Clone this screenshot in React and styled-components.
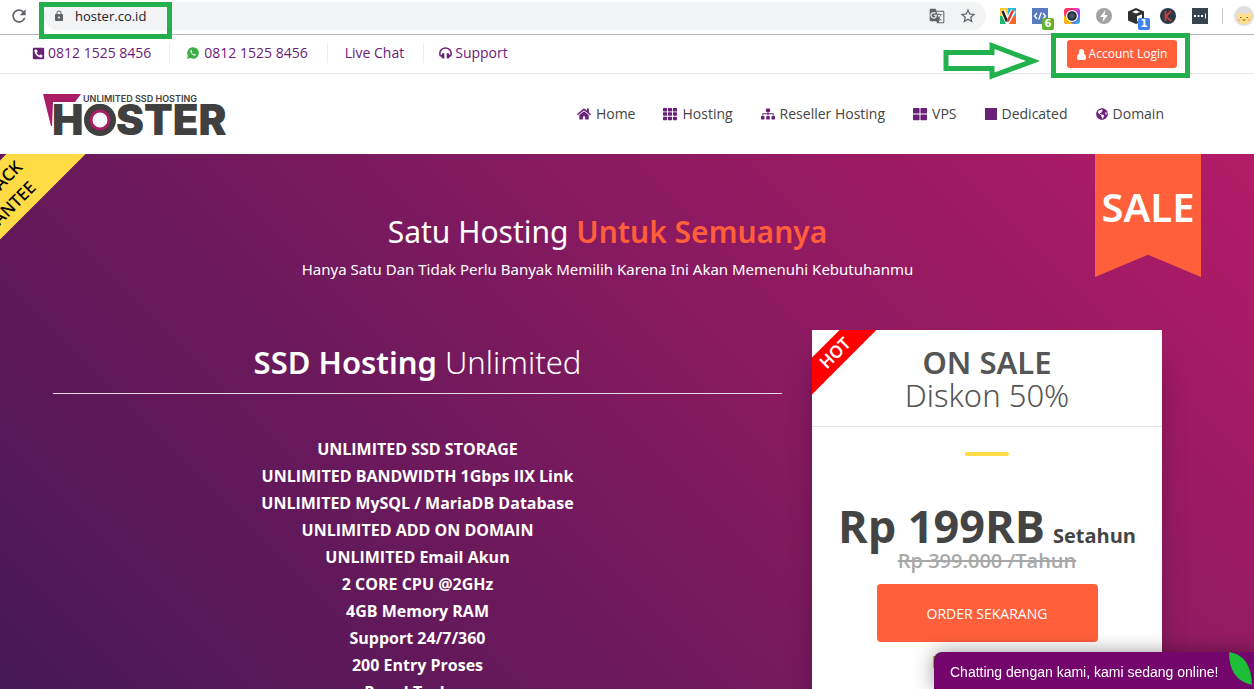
import React from "react";
import styled, { createGlobalStyle } from "styled-components";
import {
  FaPhoneSquareAlt,
  FaHome,
  FaTh,
  FaSitemap,
  FaThLarge,
  FaSquareFull,
  FaGlobeAmericas,
} from "react-icons/fa";
import { MdGTranslate, MdLock, MdRefresh, MdStarBorder } from "react-icons/md";

const purple = "#6b217a";
const orange = "#ff5f3a";
const marker = "#22b14c";
const bodyFont = `"Open Sans", "Noto Sans", sans-serif`;
const headFont = `"Noto Sans", "Open Sans", sans-serif`;

const GlobalStyle = createGlobalStyle`
  *, *::before, *::after { box-sizing: border-box; }
  body { margin: 0; background: #fff; font-family: ${bodyFont}; }
  h1, h2, p, ul { margin: 0; padding: 0; }
  ul { list-style: none; }
  a { color: inherit; text-decoration: none; }
  button { border: 0; padding: 0; background: none; font: inherit; color: inherit; cursor: pointer; }
  svg { display: block; flex: none; }
`;

const Window = styled.div`
  display: flex;
  flex-direction: column;
  height: 100vh;
  overflow: hidden;
`;

/* Browser toolbar */
const Toolbar = styled.div`
  display: flex;
  align-items: center;
  flex: none;
  height: 35px;
  padding: 0 0 2px 9px;
  border-bottom: 1px solid #b4b4b4;
`;

const ToolButton = styled.button`
  display: flex;
  color: #5f6368;
`;

const AddressBar = styled.div`
  position: relative;
  display: flex;
  align-items: center;
  flex: 1;
  gap: 14px;
  height: 28px;
  margin-left: 15px;
  padding: 0 9px;
  border-radius: 14px;
  background: #f1f3f4;
  color: #5f6368;
`;

const AddressInput = styled.input`
  flex: 1;
  min-width: 0;
  margin-left: -4px;
  padding: 0;
  border: 0;
  outline: 0;
  background: none;
  color: #202124;
  font: 13px/20px ${bodyFont};
`;

const AddressMarker = styled.span`
  position: absolute;
  z-index: 3;
  top: 0;
  left: -5px;
  width: 133px;
  height: 37px;
  border: 5px solid ${marker};
  pointer-events: none;
`;

const Extensions = styled.div`
  display: flex;
  align-items: center;
  gap: 16px;
  margin-left: 14px;
`;

const Extension = styled.button`
  position: relative;
  display: flex;
  width: 16px;
  height: 16px;
`;

const Count = styled.span`
  position: absolute;
  left: 10px;
  top: 10px;
  min-width: 12px;
  height: 12px;
  border-radius: 2px;
  background: ${(p) => p.$color};
  color: #fff;
  font: bold 10px/12px "DejaVu Sans", sans-serif;
  text-align: center;
`;

const ToolDivider = styled.span`
  width: 1px;
  height: 16px;
  margin: 0 11px 0 14px;
  background: #c8cacd;
`;

/* Contact strip */
const ContactBar = styled.div`
  display: flex;
  align-items: center;
  justify-content: space-between;
  flex: none;
  height: 39px;
  padding: 0 77px 2px 32px;
  border-bottom: 1px solid #e4e4e4;
  color: ${purple};
  font-size: 14px;
  line-height: 20px;
`;

const ContactList = styled.ul`
  display: flex;
`;

const Contact = styled.li`
  padding: 0 19px 0 17px;
  border-right: 1px solid #ededed;

  &:first-child { padding: 0 18px 0 0; }
  &:last-child { border: 0; padding-left: 15px; }
`;

const IconLink = styled.a`
  display: flex;
  align-items: center;
  gap: ${(p) => p.$gap || 5}px;
`;

const LoginArea = styled.div`
  position: relative;
  display: flex;
  margin-top: 2px;
`;

const LoginButton = styled.button`
  display: flex;
  align-items: center;
  justify-content: center;
  gap: 3px;
  width: 110px;
  height: 28px;
  border-radius: 3px;
  background: ${orange};
  color: #fff;
  font-size: 12px;
  font-weight: 500;
`;

const LoginMarker = styled.span`
  position: absolute;
  z-index: 2;
  inset: -7px -13px -10px -16px;
  border: 5px solid ${marker};
  pointer-events: none;
`;

const ArrowMarker = styled.svg`
  position: absolute;
  z-index: 2;
  right: 138px;
  top: 1px;
  pointer-events: none;
`;

/* Header with logo and main menu */
const Header = styled.header`
  display: flex;
  align-items: center;
  justify-content: space-between;
  flex: none;
  height: 80px;
  padding: 0 90px 0 43px;
`;

const Menu = styled.nav`
  display: flex;
  gap: 28px;
  color: #444;
  font-size: 14px;
  line-height: 20px;

  svg { color: ${purple}; }
`;

/* Hero */
const Hero = styled.main`
  position: relative;
  flex: 1;
  min-height: 0;
  overflow: hidden;
  padding: 58px 92px 0 53px;
  background: linear-gradient(45deg, #461856, #b31b67);
  color: #fff;
`;

const MoneyBack = styled.div`
  position: absolute;
  left: -161px;
  top: 29px;
  width: 300px;
  height: 56px;
  padding: 4px 0;
  background: #ffdc45;
  color: #000;
  font: 500 17px/24px ${headFont};
  text-align: center;
  transform: rotate(-45deg);
`;

const SaleFlag = styled.div`
  position: absolute;
  right: 53px;
  top: 0;
  width: 106px;
  height: 123px;
  background: ${orange};
  clip-path: polygon(0 0, 100% 0, 100% 100%, 50% 82%, 0 100%);
  font: 600 40px/106px ${headFont};
  text-align: center;
`;

const Title = styled.h1`
  font: 400 30px/40px ${headFont};
  text-align: center;

  strong { color: ${orange}; font-weight: 600; }
`;

const Subtitle = styled.p`
  font: 400 15px/20px ${headFont};
  margin-top: 7px;
  text-align: center;
`;

const Columns = styled.div`
  display: grid;
  grid-template-columns: 1fr 350px;
  gap: 30px;
  margin-top: 51px;
`;

const PlanTitle = styled.h2`
  padding: 12px 0 10px;
  border-bottom: 1px solid #e9dbe5;
  font: 300 31px/41px ${headFont};
  text-align: center;

  strong { font-weight: 600; }
`;

const FeatureList = styled.ul`
  margin-top: 42px;
  font: 700 16px/27px ${bodyFont};
  text-align: center;
`;

const Card = styled.section`
  position: relative;
  overflow: hidden;
  height: 100%;
  background: #fff;
  color: #444;
  text-align: center;
`;

const CardShadow = styled.div`
  height: 480px;
  box-shadow: 0 30px 24px rgba(0, 0, 0, 0.2);
`;

const Hot = styled.div`
  position: absolute;
  left: -37px;
  top: 10px;
  width: 120px;
  height: 26px;
  background: #f00;
  color: #fff;
  font: 600 17px/26px ${headFont};
  transform: rotate(-45deg);
`;

const CardHead = styled.div`
  height: 97px;
  padding-top: 16px;
  border-bottom: 1px solid #e2e2e2;
  color: #555;
  font: 300 31px/33px ${headFont};

  strong { display: block; font-weight: 600; }
`;

const Accent = styled.div`
  width: 44px;
  height: 4px;
  margin: 25px auto 40px;
  border-radius: 2px;
  background: #ffdc45;
`;

const Price = styled.p`
  display: flex;
  align-items: baseline;
  justify-content: center;
  gap: 8px;
  height: 60px;
  font-size: 20px;
  font-weight: 700;
  line-height: 60px;
  white-space: nowrap;

  strong { font-size: 45px; font-weight: 700; }
`;

const OldPrice = styled.s`
  display: block;
  margin-top: -8px;
  color: #a8a8a8;
  font-size: 20px;
  font-weight: 600;
  line-height: 26px;
`;

const OrderButton = styled.button`
  width: 221px;
  height: 58px;
  margin-top: 10px;
  border-radius: 4px;
  background: ${orange};
  color: #fff;
  font-size: 14px;
`;

const Bonus = styled.p`
  margin-top: 10px;
  color: #8fb936;
  font-size: 16px;
  font-weight: 700;
  line-height: 20px;
`;

const Chat = styled.button`
  position: fixed;
  z-index: 4;
  right: 0;
  bottom: 0;
  width: 320px;
  height: 37px;
  padding: 3px 35px 0 16px;
  border-radius: 8px 0 0 0;
  background: #73056d;
  box-shadow: 0 0 20px rgba(0, 0, 0, 0.4);
  color: #fff;
  font: 14px/20px "Liberation Sans", Arial, sans-serif;
  text-align: left;
  white-space: nowrap;
`;

const Leaf = styled.svg`
  position: absolute;
  right: 2px;
  top: 0;
`;

function Logo() {
  return (
    <svg width="184" height="46" viewBox="0 0 184 46" role="img" aria-label="Hoster, unlimited SSD hosting">
      <path d="M0 3H38L32 11H10L9 35H8Z" fill="#a91d67" />
      <text x="40" y="11" fill="#404040" fontFamily="Inter, sans-serif" fontWeight="600" fontSize="9">
        UNLIMITED SSD HOSTING
      </text>
      <text x="9" y="44" fill="#404040" fontFamily="Inter, sans-serif" fontWeight="900" fontSize="42">
        HOSTER
      </text>
      <circle cx="57" cy="29" r="16" fill="#404040" />
      <circle cx="57" cy="29" r="9" fill="#fff" stroke="#a91d67" strokeWidth="3" />
    </svg>
  );
}

const extensions = [
  {
    name: "Palette",
    art: (
      <>
        <path d="M0 0H8V8H0Z" fill="#ffc928" />
        <path d="M8 0H16V8H8Z" fill="#27b9d8" />
        <path d="M0 8H8V16H0Z" fill="#21b56f" />
        <path d="M8 8H16V16H8Z" fill="#f4682b" />
        <path d="M2.5 2.5 7.5 13.5 13.5 2.5" fill="none" stroke="#fff" strokeWidth="5" />
        <path d="M2.5 3 7 13.5" fill="none" stroke="#222" strokeWidth="2.5" />
        <path d="M7.5 13.5 13 2.5" fill="none" stroke="#e8392b" strokeWidth="2.5" />
      </>
    ),
  },
  {
    name: "Code",
    count: "6",
    color: "#64b32c",
    art: (
      <>
        <path d="M0 0H16V16H0Z" fill="#587bc0" />
        <path d="M5 5 2.5 8 5 11M11 5 13.5 8 11 11M9.2 4.5 6.8 11.5" fill="none" stroke="#fff" strokeWidth="1.3" />
      </>
    ),
  },
  {
    name: "Camera",
    art: (
      <>
        <defs>
          <linearGradient id="cam" x1="0" y1="0" x2="1" y2="1">
            <stop offset="0" stopColor="#ff3b30" />
            <stop offset="0.35" stopColor="#ff2fa0" />
            <stop offset="0.65" stopColor="#7b4dff" />
            <stop offset="1" stopColor="#14d8c4" />
          </linearGradient>
        </defs>
        <rect width="16" height="16" rx="3" fill="url(#cam)" />
        <path d="M0 7V13Q0 16 3 16H9Z" fill="#ffb800" />
        <circle cx="8" cy="8" r="6" fill="#fff" />
        <circle cx="8" cy="8" r="4.8" fill="#26313d" />
        <circle cx="8" cy="8" r="2.5" fill="#46566a" />
      </>
    ),
  },
  {
    name: "Boost",
    art: (
      <>
        <circle cx="8" cy="8" r="8" fill="#a2a2a2" />
        <path d="M9.5 2 4 9H7.5L6.5 14 12 7H8.5Z" fill="#fff" />
      </>
    ),
  },
  {
    name: "Box",
    count: "1",
    color: "#3f83f1",
    art: (
      <>
        <path d="M8 0 16 3.5V12.5L8 16 0 12.5V3.5Z" fill="#303030" />
        <path d="M4 3.9 8 2.3 12 3.9 8 5.5Z" fill="#fff" />
        <path d="M9 8.2 14 6.2V11.5L9 13.6Z" fill="#fff" />
      </>
    ),
  },
  {
    name: "Keywords",
    art: (
      <>
        <circle cx="8" cy="8" r="8" fill="#2b3946" />
        <path d="M5.5 3V13M11 3 6 8.5 11 13" fill="none" stroke="#e33d3d" strokeWidth="1.6" />
      </>
    ),
  },
  {
    name: "Passwords",
    art: (
      <>
        <path d="M0 0H16V16H0Z" fill="#36444f" />
        <path d="M2 7H4V9H2ZM5.5 7H7.5V9H5.5ZM9 7H11V9H9ZM13 5.5H14V10.5H13Z" fill="#fff" />
      </>
    ),
  },
];

const menu = [
  ["Home", FaHome],
  ["Hosting", FaTh],
  ["Reseller Hosting", FaSitemap],
  ["VPS", FaThLarge],
  ["Dedicated", FaSquareFull],
  ["Domain", FaGlobeAmericas],
];

const features = [
  "UNLIMITED SSD STORAGE",
  "UNLIMITED BANDWIDTH 1Gbps IIX Link",
  "UNLIMITED MySQL / MariaDB Database",
  "UNLIMITED ADD ON DOMAIN",
  "UNLIMITED Email Akun",
  "2 CORE CPU @2GHz",
  "4GB Memory RAM",
  "Support 24/7/360",
  "200 Entry Proses",
  "Panel Techno",
];

function BrowserToolbar() {
  return (
    <Toolbar>
      <ToolButton aria-label="Reload"><MdRefresh size={20} /></ToolButton>
      <AddressBar>
        <MdLock size={12} />
        <AddressInput aria-label="Address" defaultValue="hoster.co.id" />
        <ToolButton aria-label="Translate"><MdGTranslate size={16} /></ToolButton>
        <ToolButton aria-label="Bookmark"><MdStarBorder size={18} /></ToolButton>
        <AddressMarker />
      </AddressBar>
      <Extensions>
        {extensions.map((e) => (
          <Extension key={e.name} aria-label={e.name}>
            <svg width="16" height="16" viewBox="0 0 16 16">{e.art}</svg>
            {e.count && <Count $color={e.color}>{e.count}</Count>}
          </Extension>
        ))}
      </Extensions>
      <ToolDivider />
      <ToolButton aria-label="Profile">
        <svg width="20" height="20" viewBox="0 0 20 20">
          <circle cx="10" cy="10" r="10" fill="#dedede" />
          <path d="M3 14V6L7 8H13L17 6V14Q15 18 10 18T3 14Z" fill="#ffdf87" />
          <path d="M6 11.5H7.5M12.5 11.5H14M8.5 13.5 10 14.5 11.5 13.5" fill="none" stroke="#8a5a2b" />
          <circle cx="5" cy="14" r="1.2" fill="#ffb08a" />
          <circle cx="15" cy="14" r="1.2" fill="#ffb08a" />
        </svg>
      </ToolButton>
    </Toolbar>
  );
}

export default function App() {
  return (
    <Window>
      <GlobalStyle />
      <BrowserToolbar />
      <ContactBar>
        <ContactList>
          <Contact><IconLink href="#phone" $gap={3}><FaPhoneSquareAlt size={13} />0812 1525 8456</IconLink></Contact>
          <Contact>
            <IconLink href="#whatsapp">
              <svg width="12" height="12" viewBox="0 0 13 13">
                <path d="M0 13 1 9.5A6.3 6.3 0 1 1 3.5 12Z" fill="#3fae49" />
                <path d="M4.3 3.2Q3 4.2 4.2 6.2T7.6 9.3Q9.2 9.7 9.6 8.3L8 7.3 7.1 8Q5.5 7.2 5 5.8L5.6 5 5 3.2Z" fill="#fff" />
              </svg>
              0812 1525 8456
            </IconLink>
          </Contact>
          <Contact><IconLink href="#chat">Live Chat</IconLink></Contact>
          <Contact>
            <IconLink href="#support" $gap={3}>
              <svg width="13" height="12" viewBox="0 0 13 12">
                <path d="M1.6 9.2Q0.8 8.2 0.8 6.4A5.7 5.4 0 0 1 12.2 6.4Q12.2 8.2 11.4 9.2" fill="none" stroke={purple} strokeWidth="1.5" />
                <path d="M2 8.2 3.6 6.3H5.3V11.5H3.6L1.3 9ZM11 8.2 9.4 6.3H7.7V11.5H9.4L11.7 9Z" fill={purple} />
              </svg>
              Support
            </IconLink>
          </Contact>
        </ContactList>
        <LoginArea>
          <LoginButton>
            <svg width="9" height="11" viewBox="0 0 9 11">
              <path d="M4.5 0A2.7 2.9 0 0 1 6.6 4.8Q9 5.2 9 8.8Q9 11 7.2 11H1.8Q0 11 0 8.8Q0 5.2 2.4 4.8A2.7 2.9 0 0 1 4.5 0Z" fill="#fff" />
            </svg>
            Account Login
          </LoginButton>
          <LoginMarker />
          <ArrowMarker width="98" height="40" viewBox="0 0 98 40">
            <path d="M5 11.5H51V4.5L92 20 51 35V27.5H5Z" fill="none" stroke={marker} strokeWidth="5" />
          </ArrowMarker>
        </LoginArea>
      </ContactBar>
      <Header>
        <a href="#home"><Logo /></a>
        <Menu>
          {menu.map(([label, Icon]) => (
            <IconLink key={label} href={"#" + label}><Icon size={label === "Dedicated" || label === "Domain" ? 12 : 14} />{label}</IconLink>
          ))}
        </Menu>
      </Header>
      <Hero>
        <MoneyBack>MONEY BACK<br />GUARANTEE</MoneyBack>
        <SaleFlag>SALE</SaleFlag>
        <Title>Satu Hosting <strong>Untuk Semuanya</strong></Title>
        <Subtitle>Hanya Satu Dan Tidak Perlu Banyak Memilih Karena Ini Akan Memenuhi Kebutuhanmu</Subtitle>
        <Columns>
          <section>
            <PlanTitle><strong>SSD Hosting</strong> Unlimited</PlanTitle>
            <FeatureList>
              {features.map((f) => <li key={f}>{f}</li>)}
            </FeatureList>
          </section>
          <CardShadow>
            <Card>
              <Hot>HOT</Hot>
              <CardHead><strong>ON SALE</strong>Diskon 50%</CardHead>
              <Accent />
              <Price><strong>Rp 199RB</strong> Setahun</Price>
              <OldPrice>Rp 399.000 /Tahun</OldPrice>
              <OrderButton>ORDER SEKARANG</OrderButton>
              <Bonus>FREE DOMAIN</Bonus>
            </Card>
          </CardShadow>
        </Columns>
      </Hero>
      <Chat>
        Chatting dengan kami, kami sedang online!
        <Leaf width="23" height="33" viewBox="0 0 23 33">
          <path d="M0 0Q22 3 23 33Q0 28 0 0Z" fill="#1dbf38" />
        </Leaf>
      </Chat>
    </Window>
  );
}
